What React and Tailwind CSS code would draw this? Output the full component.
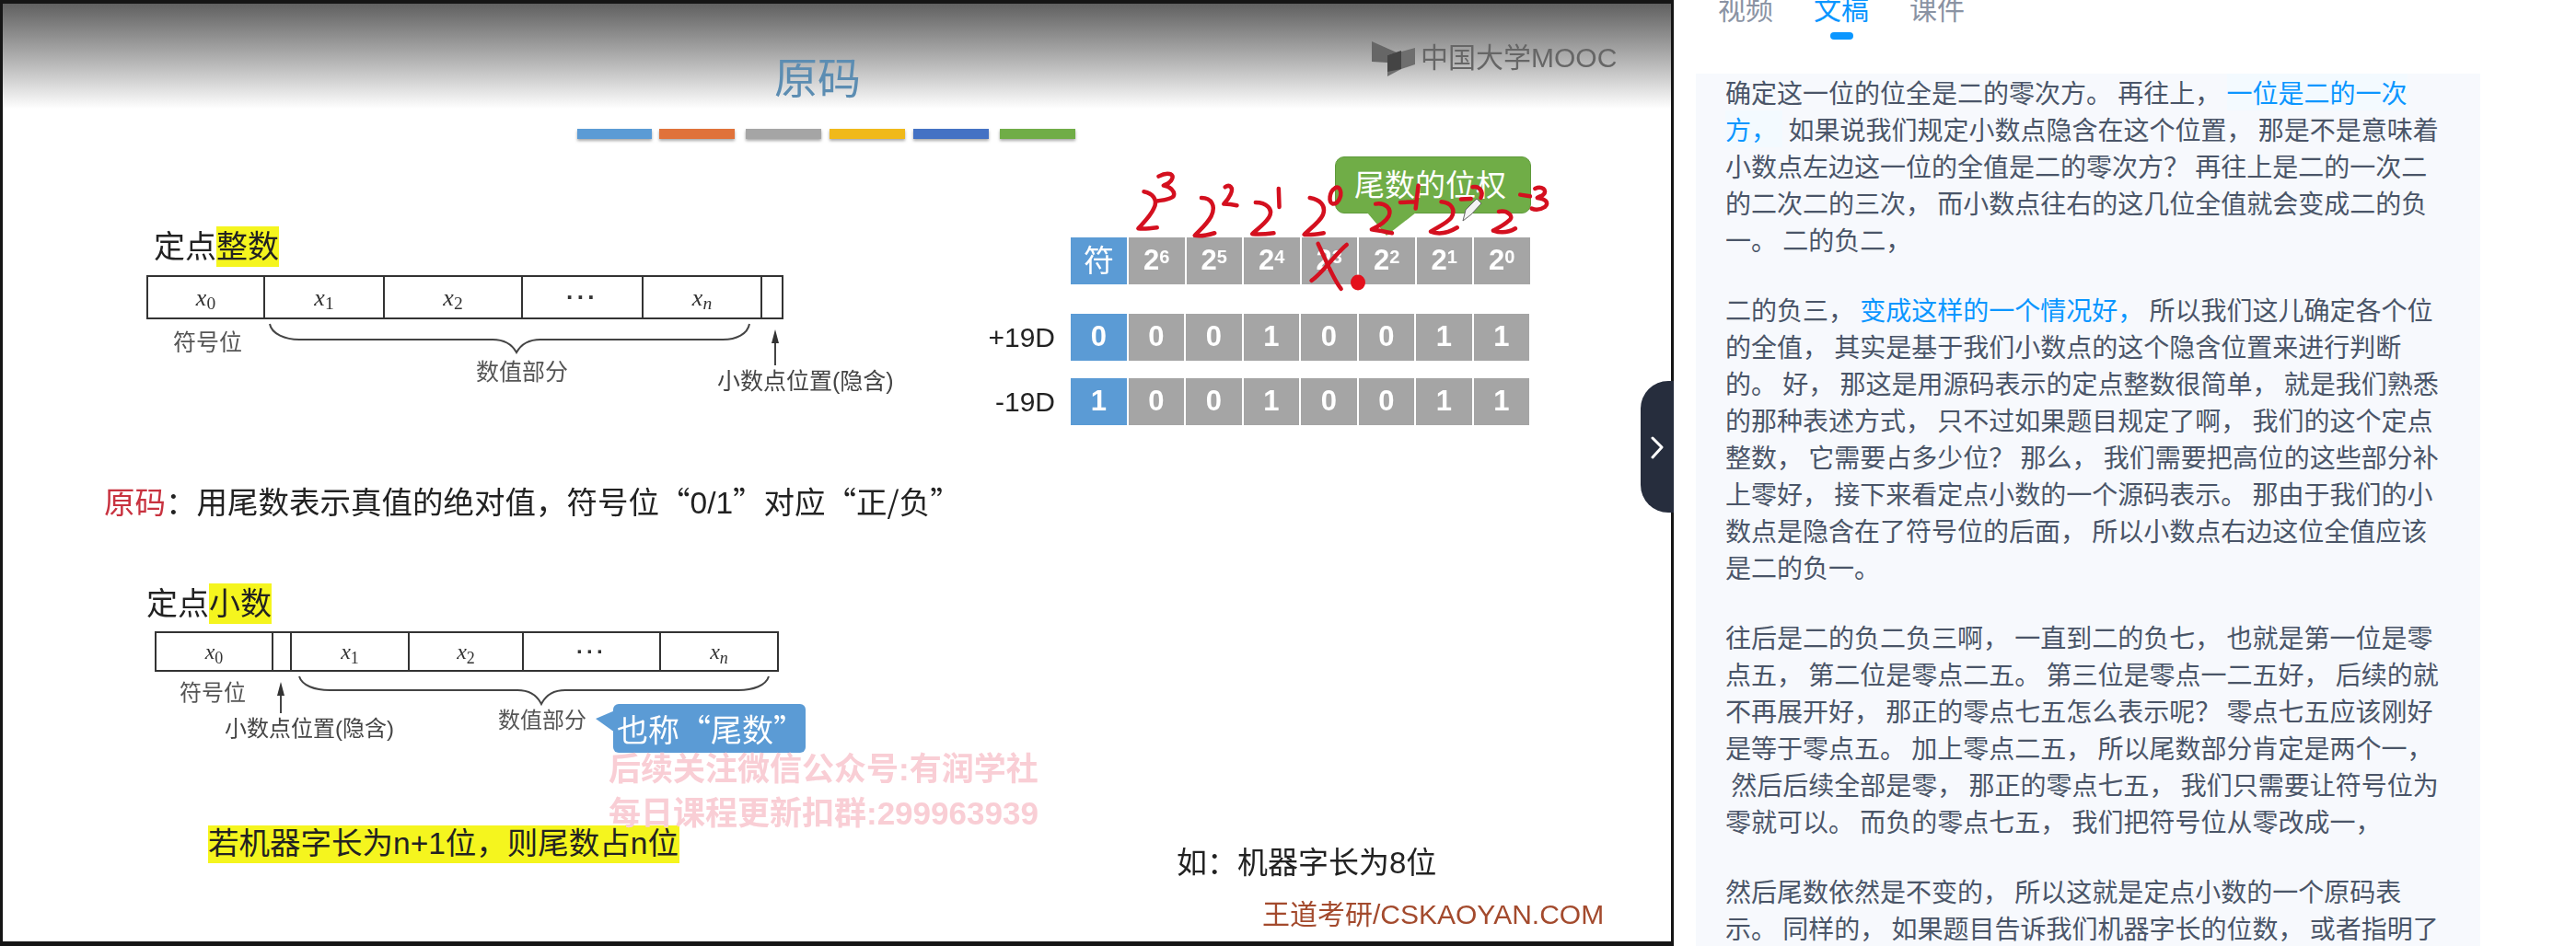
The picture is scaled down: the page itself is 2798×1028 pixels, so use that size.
const bars = [
  ['w-[81px]', 'bg-[#5b9bd5]'],
  ['w-[82px] ml-[8px]', 'bg-[#e0723a]'],
  ['w-[82px] ml-[12px]', 'bg-[#a5a5a5]'],
  ['w-[82px] ml-[9px]', 'bg-[#f0b91a]'],
  ['w-[82px] ml-[9px]', 'bg-[#4472c4]'],
  ['w-[82px] ml-[12px]', 'bg-[#70ad47]'],
];

const bitRows = [
  { top: 'top-[341px]', label: '+19D', bits: ['0', '0', '0', '1', '0', '0', '1', '1'] },
  { top: 'top-[411px]', label: '-19D', bits: ['1', '0', '0', '1', '0', '0', '1', '1'] },
];

const weights = ['6', '5', '4', '3', '2', '1', '0'];

const paragraphs = [
  [
    [['确定这一位的位全是二的零次方。 再往上， '], ['一位是二的一次', 'mark']],
    [['方， ', 'mark'], [' 如果说我们规定小数点隐含在这个位置， 那是不是意味着']],
    [['小数点左边这一位的全值是二的零次方？ 再往上是二的一次二']],
    [['的二次二的三次， 而小数点往右的这几位全值就会变成二的负']],
    [['一。 二的负二，']],
  ],
  [
    [['二的负三， '], ['变成这样的一个情况好，', 'blue'], [' 所以我们这儿确定各个位']],
    [['的全值， 其实是基于我们小数点的这个隐含位置来进行判断']],
    [['的。 好， 那这是用源码表示的定点整数很简单， 就是我们熟悉']],
    [['的那种表述方式， 只不过如果题目规定了啊， 我们的这个定点']],
    [['整数， 它需要占多少位？ 那么， 我们需要把高位的这些部分补']],
    [['上零好， 接下来看定点小数的一个源码表示。 那由于我们的小']],
    [['数点是隐含在了符号位的后面， 所以小数点右边这位全值应该']],
    [['是二的负一。']],
  ],
  [
    [['往后是二的负二负三啊， 一直到二的负七， 也就是第一位是零']],
    [['点五， 第二位是零点二五。 第三位是零点一二五好， 后续的就']],
    [['不再展开好， 那正的零点七五怎么表示呢？ 零点七五应该刚好']],
    [['是等于零点五。 加上零点二五， 所以尾数部分肯定是两个一，']],
    [[' 然后后续全部是零， 那正的零点七五， 我们只需要让符号位为']],
    [['零就可以。 而负的零点七五， 我们把符号位从零改成一，']],
  ],
  [
    [['然后尾数依然是不变的， 所以这就是定点小数的一个原码表']],
    [['示。 同样的， 如果题目告诉我们机器字长的位数， 或者指明了']],
  ],
];

function Cell({ width, children, last }) {
  return (
    <div className={`${width} flex items-center justify-center ${last ? '' : 'border-r-2 border-[#333]'}`}>
      {children}
    </div>
  );
}

function X({ sub }) {
  return (
    <span className="font-['Liberation_Serif',serif] italic">
      x<sub className={sub === 'n' ? 'italic' : 'not-italic'}>{sub}</sub>
    </span>
  );
}

function RedInk() {
  return (
    <g transform="translate(1130 160) scale(0.357 0.333)" fill="none" stroke="#d4101f" strokeWidth="4.5" strokeLinecap="round" strokeLinejoin="round">
      <path vectorEffect="non-scaling-stroke" d="M315 145 C340 150 360 170 345 200 C335 225 310 250 298 265 C315 268 335 265 355 262" />
      <path vectorEffect="non-scaling-stroke" d="M360 95 C385 80 410 85 400 105 C395 118 380 122 375 125 C395 128 412 145 405 160 C395 170 375 172 358 175" />
      <path vectorEffect="non-scaling-stroke" d="M490 165 C520 165 535 190 520 225 C505 255 480 275 470 288 C490 292 515 285 530 280" />
      <path vectorEffect="non-scaling-stroke" d="M562 130 C575 120 590 130 578 155 C572 170 562 180 558 185 C575 185 590 188 598 190" />
      <path vectorEffect="non-scaling-stroke" d="M655 180 C685 180 712 200 695 230 C680 255 655 270 645 283 C665 285 690 283 710 280" />
      <path vectorEffect="non-scaling-stroke" d="M725 135 L727 195" />
      <path vectorEffect="non-scaling-stroke" d="M820 165 C850 170 870 190 860 220 C850 245 815 270 803 285 C825 287 845 283 862 280" />
      <path vectorEffect="non-scaling-stroke" d="M895 135 C880 145 875 180 890 185 C910 185 920 150 910 135 C905 128 898 130 895 135" />
      <path vectorEffect="non-scaling-stroke" d="M1020 185 C1050 180 1070 200 1060 225 C1050 245 1025 260 1008 268 C1030 272 1050 275 1070 280" />
      <path vectorEffect="non-scaling-stroke" d="M1095 180 L1140 178 M1150 125 L1142 200" />
      <path vectorEffect="non-scaling-stroke" d="M1220 178 C1250 180 1265 205 1250 230 C1235 250 1205 262 1188 275 C1210 285 1240 280 1268 262" />
      <path vectorEffect="non-scaling-stroke" d="M1280 170 L1310 168 M1315 130 C1335 125 1350 145 1340 165" />
      <path vectorEffect="non-scaling-stroke" d="M1395 210 C1420 205 1445 225 1425 240 C1410 255 1385 268 1378 272 C1400 280 1425 278 1445 265" />
      <path vectorEffect="non-scaling-stroke" d="M1460 155 L1490 160 M1505 135 C1525 125 1545 140 1530 155 C1525 160 1515 162 1512 165 C1535 168 1550 180 1535 195 C1520 205 1505 205 1495 200" />
      <path vectorEffect="non-scaling-stroke" d="M845 315 C870 370 890 430 915 462" />
      <path vectorEffect="non-scaling-stroke" d="M932 318 C900 345 860 410 825 435" />
    </g>
  );
}

function Drawings() {
  return (
    <svg className="absolute left-0 top-0 w-[1818px] h-[1028px]" viewBox="0 0 1818 1028">
      {/* logo */}
      <polygon points="1490,45 1517,57 1507,60 1507,68 1490,67" fill="#666" />
      <polygon points="1507,60 1537,52 1537,70 1522,75 1507,83" fill="#6e6e6e" />
      <polygon points="1507,60 1522,55 1522,75 1507,78" fill="#444" />
      {/* braces and arrows */}
      <g fill="none" stroke="#444" strokeWidth="2">
        <path d="M293 352 C295 363 310 369 325 369 L535 369 C548 369 556 374 561 383 C566 374 574 369 587 369 L785 369 C800 369 812 363 814 352" />
        <path d="M325 735 C328 745 342 750 358 750 L562 750 C575 750 583 755 588 765 C593 755 601 750 614 750 L802 750 C818 750 832 745 835 735" />
        <path d="M842 397 L842 365" />
        <path d="M305 775 L305 750" />
      </g>
      <polygon points="842,358 838,373 846,373" fill="#333" />
      <polygon points="305,741 301,756 309,756" fill="#333" />
      {/* callout tails */}
      <polygon points="1485,231 1506,256 1538,231" fill="#70ad47" />
      <polygon points="647,781 668,772 668,796" fill="#5b9bd5" />
      <RedInk />
      <ellipse cx="1475" cy="307" rx="8" ry="8.5" fill="#e4101c" />
      {/* pen cursor */}
      <polygon points="1589,240 1592,228 1604,216 1609,221 1598,233" fill="#f4f4f4" stroke="#666" strokeWidth="1" />
    </svg>
  );
}

function Slide() {
  return (
    <div className="relative w-[1818px] h-[1028px] shrink-0 bg-white overflow-hidden font-['Liberation_Sans','Noto_Sans_CJK_SC',sans-serif] text-[#222]">
      <div className="blur-[0.6px] absolute inset-0">
        <div className="absolute left-0 top-0 w-full h-[118px] bg-linear-to-b from-[#5c5c5c] to-white" />

        {/* header */}
        <div className="absolute left-[841px] top-[62px] text-[47px] leading-none text-[#5c8db2]">原码</div>
        <div className="absolute left-[1543px] top-[48px] text-[30px] leading-[30px] text-[#666] whitespace-nowrap">中国大学MOOC</div>
        <div className="absolute left-[627px] top-[140px] flex">
          {bars.map(([w, c]) => (
            <div key={c} className={`${w} h-[11px] ${c} shadow-[0_2px_3px_rgba(0,0,0,0.35)]`} />
          ))}
        </div>

        {/* fixed-point integer */}
        <div className="absolute left-[167px] top-[246px] flex text-[34px] leading-[44px]">
          定点<span className="bg-[#f5f51e]">整数</span>
        </div>
        <div className="absolute left-[159px] top-[299px] w-[692px] h-[48px] flex border-2 border-[#333] text-[26px] text-[#333]">
          <Cell width="w-[127px]"><X sub="0" /></Cell>
          <Cell width="w-[130px]"><X sub="1" /></Cell>
          <Cell width="w-[150px]"><X sub="2" /></Cell>
          <Cell width="w-[131px]"><span className="tracking-[3px] font-bold">···</span></Cell>
          <Cell width="w-[129px]"><X sub="n" /></Cell>
          <Cell width="flex-1" last />
        </div>
        <div className="absolute left-[188px] top-[360px] text-[25px] leading-none text-[#555]">符号位</div>
        <div className="absolute left-[517px] top-[392px] text-[25px] leading-none text-[#555]">数值部分</div>
        <div className="absolute left-[779px] top-[402px] text-[25px] leading-none text-[#444] whitespace-nowrap">小数点位置(隐含)</div>

        {/* bit table */}
        <div className="absolute left-[1163px] top-[258px] flex gap-[2px] h-[51px] text-white font-bold">
          <div className="w-[61px] bg-[#5b9bd5] flex items-center justify-center text-[33px] font-normal">符</div>
          {weights.map((w) => (
            <div key={w} className="w-[60.5px] bg-[#a5a5a5] flex items-center justify-center text-[31px]">
              2<span className="text-[20px] -mt-[10px]">{w}</span>
            </div>
          ))}
        </div>
        {bitRows.map((row) => (
          <div key={row.label} className={`absolute left-[1063px] ${row.top} flex items-center h-[51px]`}>
            <div className="w-[84px] text-right pr-[1px] text-[30px] mr-[16px] text-[#222]">{row.label}</div>
            <div className="flex gap-[2px] h-full text-white font-bold text-[31px]">
              {row.bits.map((b, i) => (
                <div key={i} className={`w-[60.5px] flex items-center justify-center ${i === 0 ? 'bg-[#5b9bd5]' : 'bg-[#a5a5a5]'}`}>{b}</div>
              ))}
            </div>
          </div>
        ))}
        <div className="absolute left-[1450px] top-[170px] w-[213px] h-[62px] rounded-[10px] bg-[#70ad47] border border-[#5f9a3c] text-white text-[33px] leading-none pt-[14px] pl-[20px] whitespace-nowrap">
          尾数的位权
        </div>

        {/* sign-magnitude note */}
        <div className="absolute left-[113px] top-[526px] text-[33.5px] leading-[36px] whitespace-nowrap font-['Noto_Sans_CJK_SC',sans-serif]">
          <span className="text-[#c8323f]">原码</span>：用尾数表示真值的绝对值，符号位“<span className="font-['Liberation_Sans',sans-serif]">0/1</span>”对应“正/负”
        </div>

        {/* fixed-point fraction */}
        <div className="absolute left-[159px] top-[634px] flex text-[34px] leading-[44px]">
          定点<span className="bg-[#f5f51e]">小数</span>
        </div>
        <div className="absolute left-[168px] top-[686px] w-[678px] h-[44px] flex border-2 border-[#333] text-[24px] text-[#333]">
          <Cell width="w-[127px]"><X sub="0" /></Cell>
          <Cell width="w-[20px]" />
          <Cell width="w-[128px]"><X sub="1" /></Cell>
          <Cell width="w-[124px]"><X sub="2" /></Cell>
          <Cell width="w-[149px]"><span className="tracking-[3px] font-bold">···</span></Cell>
          <Cell width="flex-1" last><X sub="n" /></Cell>
        </div>
        <div className="absolute left-[195px] top-[741px] text-[24px] leading-none text-[#555]">符号位</div>
        <div className="absolute left-[244px] top-[780px] text-[24px] leading-none text-[#444] whitespace-nowrap">小数点位置(隐含)</div>
        <div className="absolute left-[541px] top-[771px] text-[24px] leading-none text-[#555]">数值部分</div>
        <div className="absolute left-[666px] top-[765px] w-[209px] h-[53px] rounded-[6px] bg-[#5b9bd5] text-white text-[34px] leading-none pt-[10px] pl-[4px] whitespace-nowrap font-['Noto_Sans_CJK_SC',sans-serif]">
          也称“尾数”
        </div>

        <div className="absolute left-[226px] top-[897px] w-[512px] h-[41px] flex items-center bg-[#f5f51e] text-[33.5px] whitespace-nowrap">
          若机器字长为n+1位，则尾数占n位
        </div>
        <div className="absolute left-[1278px] top-[920px] text-[33px] leading-[36px] whitespace-nowrap">如：机器字长为8位</div>
        <div className="absolute left-[1371px] top-[977px] text-[30px] leading-[34px] text-[#a34a2d] whitespace-nowrap">王道考研/CSKAOYAN.COM</div>

        {/* watermark */}
        <div className="absolute left-[661px] top-[812px] text-[35px] leading-[48px] font-bold text-[#f9ced5] whitespace-nowrap">
          <div>后续关注微信公众号:有润学社</div>
          <div>每日课程更新扣群:299963939</div>
        </div>

        <Drawings />
      </div>

      {/* video frame */}
      <div className="absolute inset-0 border-t-[4px] border-l-[3px] border-r-[3px] border-b-[5px] border-[#151515] pointer-events-none" />

      {/* collapse handle */}
      <div className="absolute right-0 top-[414px] w-[36px] h-[143px] rounded-l-[30px] bg-[#262d3d] flex items-center justify-center">
        <svg className="w-[16px] h-[26px]" viewBox="0 0 16 26" fill="none" stroke="white" strokeWidth="3" strokeLinecap="round" strokeLinejoin="round">
          <path d="M3 3 L13 13 L3 24" />
        </svg>
      </div>
    </div>
  );
}

function Tabs() {
  return (
    <div className="flex h-[80px] gap-[44px] pl-[48px] text-[30px] leading-[38px] text-[#8a93a3]">
      <div className="-mt-[11px]">视频</div>
      <div className="-mt-[11px] flex flex-col items-center text-[#0a96ff]">
        文稿
        <div className="w-[25px] h-[8px] mt-[8px] rounded-full bg-[#0a96ff]" />
      </div>
      <div className="-mt-[11px]">课件</div>
    </div>
  );
}

function Transcript() {
  return (
    <div className="ml-[24px] w-[852px] flex-1 pl-[32px] bg-[#f7f9fd] overflow-hidden text-[28px] leading-[40px] text-[#4a5568] whitespace-pre">
      {paragraphs.map((lines, i) => (
        <div key={i} className="mb-[36px]">
          {lines.map((spans, j) => (
            <div key={j}>
              {spans.map(([text, kind], k) => (
                <span
                  key={k}
                  className={
                    kind === 'mark'
                      ? 'text-[#0a96ff] bg-[#f3faff]'
                      : kind === 'blue'
                        ? 'text-[#0a96ff]'
                        : ''
                  }
                >
                  {text}
                </span>
              ))}
            </div>
          ))}
        </div>
      ))}
    </div>
  );
}

export default function App() {
  return (
    <div className="flex w-[2798px] h-[1028px] overflow-hidden bg-white">
      <Slide />
      <div className="flex-1 flex flex-col h-full font-['Noto_Sans_CJK_SC',sans-serif]">
        <Tabs />
        <Transcript />
      </div>
    </div>
  );
}
